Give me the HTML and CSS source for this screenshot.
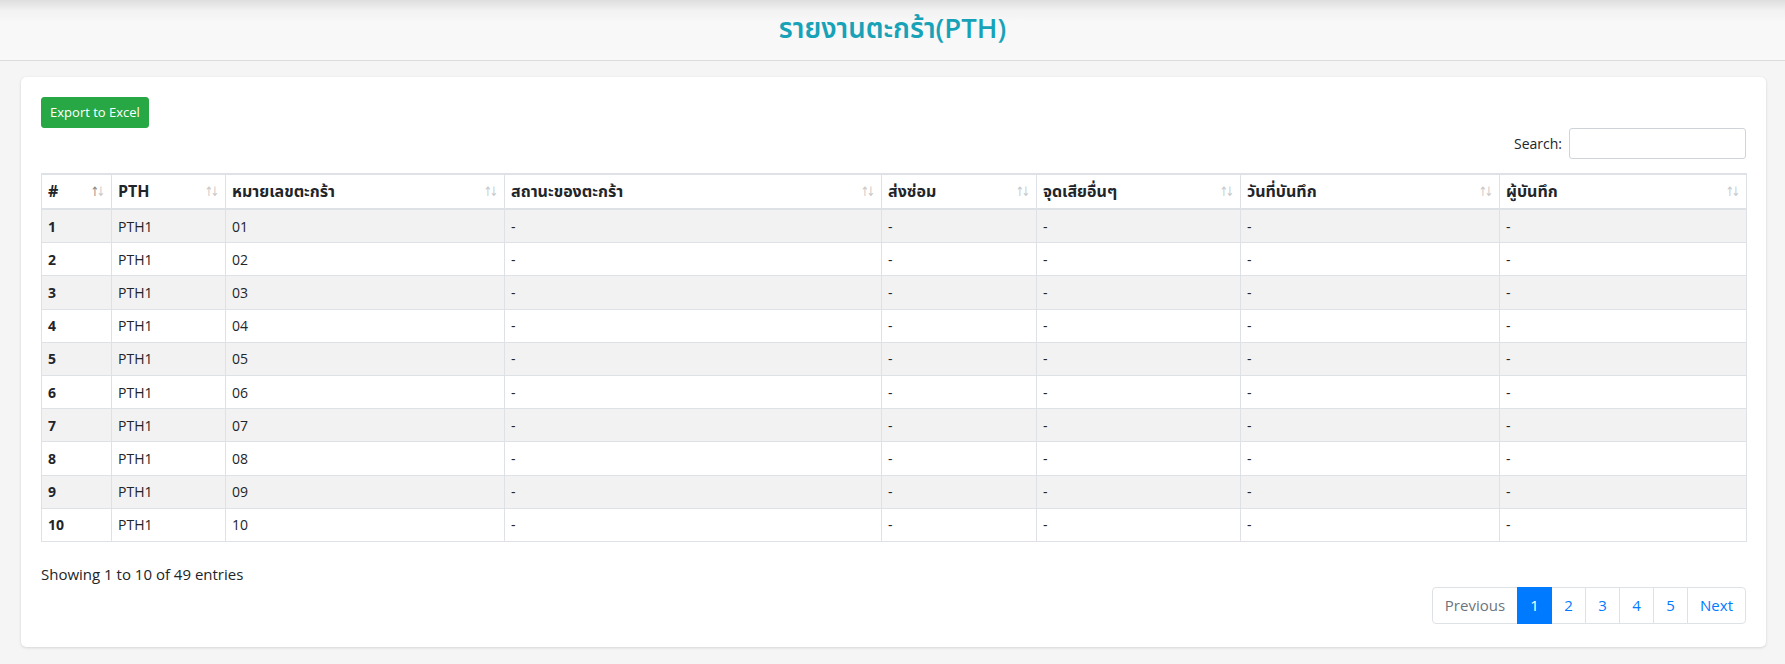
FILE: index.html
```html
<!DOCTYPE html>
<html lang="th">
<head>
<meta charset="utf-8">
<title>รายงานตะกร้า(PTH)</title>
<link rel="stylesheet" href="styles.css">
</head>
<body>
<header class="topbar">
  <h1 class="page-title">รายงานตะกร้า(PTH)</h1>
</header>
<main class="main">
  <section class="card">
    <div class="toolbar">
      <button class="btn-excel" type="button">Export to Excel</button>
      <div class="search-row">
        <label class="search-label" for="q">Search:</label>
        <input class="search-input" id="q" type="search">
      </div>
    </div>
    <table class="data-table">
      <colgroup>
        <col class="c1"><col class="c2"><col class="c3"><col class="c4"><col class="c5"><col class="c6"><col class="c7"><col class="c8">
      </colgroup>
      <thead>
        <tr>
          <th><div class="th-in"><span>#</span><span class="sort asc"><i class="up">↑</i><i class="dn">↓</i></span></div></th>
          <th><div class="th-in"><span>PTH</span><span class="sort"><i class="up">↑</i><i class="dn">↓</i></span></div></th>
          <th><div class="th-in"><span>หมายเลขตะกร้า</span><span class="sort"><i class="up">↑</i><i class="dn">↓</i></span></div></th>
          <th><div class="th-in"><span>สถานะของตะกร้า</span><span class="sort"><i class="up">↑</i><i class="dn">↓</i></span></div></th>
          <th><div class="th-in"><span>ส่งซ่อม</span><span class="sort"><i class="up">↑</i><i class="dn">↓</i></span></div></th>
          <th><div class="th-in"><span>จุดเสียอื่นๆ</span><span class="sort"><i class="up">↑</i><i class="dn">↓</i></span></div></th>
          <th><div class="th-in"><span>วันที่บันทึก</span><span class="sort"><i class="up">↑</i><i class="dn">↓</i></span></div></th>
          <th><div class="th-in"><span>ผู้บันทึก</span><span class="sort"><i class="up">↑</i><i class="dn">↓</i></span></div></th>
        </tr>
      </thead>
      <tbody>
        <tr><td class="num">1</td><td>PTH1</td><td>01</td><td>-</td><td>-</td><td>-</td><td>-</td><td>-</td></tr>
        <tr><td class="num">2</td><td>PTH1</td><td>02</td><td>-</td><td>-</td><td>-</td><td>-</td><td>-</td></tr>
        <tr><td class="num">3</td><td>PTH1</td><td>03</td><td>-</td><td>-</td><td>-</td><td>-</td><td>-</td></tr>
        <tr><td class="num">4</td><td>PTH1</td><td>04</td><td>-</td><td>-</td><td>-</td><td>-</td><td>-</td></tr>
        <tr><td class="num">5</td><td>PTH1</td><td>05</td><td>-</td><td>-</td><td>-</td><td>-</td><td>-</td></tr>
        <tr><td class="num">6</td><td>PTH1</td><td>06</td><td>-</td><td>-</td><td>-</td><td>-</td><td>-</td></tr>
        <tr><td class="num">7</td><td>PTH1</td><td>07</td><td>-</td><td>-</td><td>-</td><td>-</td><td>-</td></tr>
        <tr><td class="num">8</td><td>PTH1</td><td>08</td><td>-</td><td>-</td><td>-</td><td>-</td><td>-</td></tr>
        <tr><td class="num">9</td><td>PTH1</td><td>09</td><td>-</td><td>-</td><td>-</td><td>-</td><td>-</td></tr>
        <tr><td class="num">10</td><td>PTH1</td><td>10</td><td>-</td><td>-</td><td>-</td><td>-</td><td>-</td></tr>
      </tbody>
    </table>
    <div class="footer-area">
      <div class="info">Showing 1 to 10 of 49 entries</div>
      <ul class="pagination">
        <li class="page disabled"><a>Previous</a></li>
        <li class="page active"><a>1</a></li>
        <li class="page"><a>2</a></li>
        <li class="page"><a>3</a></li>
        <li class="page"><a>4</a></li>
        <li class="page"><a>5</a></li>
        <li class="page"><a>Next</a></li>
      </ul>
    </div>
  </section>
</main>
</body>
</html>
```

FILE: styles.css
```css
* { box-sizing: border-box; }

html, body {
  margin: 0;
  padding: 0;
}

body {
  background: #f5f5f5;
  font-family: "Open Sans", "Noto Sans", "Noto Sans Thai", "Noto Sans CJK SC", sans-serif;
  color: #212529;
  font-size: 14px;
  line-height: 1.5;
  width: 1785px;
  height: 664px;
  overflow: hidden;
}

.topbar {
  height: 61px;
  padding-bottom: 5px;
  background: linear-gradient(#dedede 0px, #f1f1f1 10px, #f8f8f8 22px, #f8f8f8 100%);
  border-bottom: 1px solid #dcdcdc;
  display: flex;
  align-items: center;
  justify-content: center;
}

.page-title {
  margin: 0;
  font-size: 27.5px;
  font-weight: 600;
  color: #17a2b8;
  line-height: 1.2;
}

.main {
  padding: 16px 19px 17px 21px;
}

.card {
  background: #fff;
  border-radius: 5px;
  box-shadow: 0 1px 3px rgba(0, 0, 0, 0.12), 0 0 1px rgba(0, 0, 0, 0.08);
  height: 570px;
  padding: 20px 20px 22px 20px;
  display: flex;
  flex-direction: column;
}

.toolbar {
  display: flex;
  flex-direction: column;
  align-items: flex-start;
}

.btn-excel {
  height: 31px;
  width: 108px;
  padding: 0 8px;
  background: #28a745;
  color: #fff;
  border: 1px solid #28a745;
  border-radius: 3px;
  font-family: inherit;
  font-size: 13px;
  line-height: 29px;
  white-space: nowrap;
}

.search-row {
  align-self: stretch;
  display: flex;
  justify-content: flex-end;
  align-items: center;
  gap: 7px;
}

.search-label {
  font-size: 14px;
}

.search-input {
  width: 177px;
  height: 31px;
  border: 1px solid #ced4da;
  border-radius: 3px;
  background: #fff;
}

.data-table {
  margin-top: 14px;
  width: 100%;
  table-layout: fixed;
  border-collapse: collapse;
  border: 1px solid #dee2e6;
}

.c1 { width: 70px; }
.c2 { width: 114px; }
.c3 { width: 279px; }
.c4 { width: 377px; }
.c5 { width: 155px; }
.c6 { width: 204px; }
.c7 { width: 259px; }
.c8 { width: 247px; }

.data-table th {
  border: 1px solid #dee2e6;
  border-top-width: 2px;
  border-bottom-width: 2px;
  padding: 4px 9px 4px 6px;
  font-size: 16px;
  font-weight: 700;
  line-height: 25px;
  text-align: left;
}

.th-in {
  display: flex;
  justify-content: space-between;
  align-items: center;
}

.sort {
  display: flex;
  font-size: 13px;
  font-style: normal;
  line-height: 1;
  color: #c8c8c8;
  font-weight: 400;
  font-family: "DejaVu Sans", sans-serif;
}

.sort i {
  font-style: normal;
  display: block;
  width: 6px;
  overflow: visible;
  transform: scaleX(0.8);
}

.sort.asc .up { color: #888; }

.data-table td {
  border: 1px solid #dee2e6;
  padding: 5.6px 6px;
  line-height: 21px;
  font-size: 14px;
  white-space: nowrap;
}

.data-table tbody tr:nth-child(odd) {
  background: #f2f2f2;
}

.data-table td.num {
  font-weight: 700;
}

.footer-area {
  display: flex;
  flex-direction: column;
  margin-top: 20px;
}

.info {
  font-size: 15px;
  line-height: 24px;
}

.pagination {
  list-style: none;
  margin: 1px 0 0 0;
  padding: 0;
  align-self: flex-end;
  display: flex;
  border-radius: 4px;
}

.page a {
  display: block;
  height: 37px;
  padding: 0 12px;
  border: 1px solid #dee2e6;
  margin-left: -1px;
  color: #007bff;
  font-size: 15px;
  line-height: 35px;
  background: #fff;
  min-width: 35px;
  text-align: center;
}

.page:first-child a {
  margin-left: 0;
  border-radius: 4px 0 0 4px;
}

.page:last-child a {
  border-radius: 0 4px 4px 0;
}

.page.disabled a {
  color: #6c757d;
}

.page.active a {
  background: #007bff;
  border-color: #007bff;
  color: #fff;
  position: relative;
}
```
